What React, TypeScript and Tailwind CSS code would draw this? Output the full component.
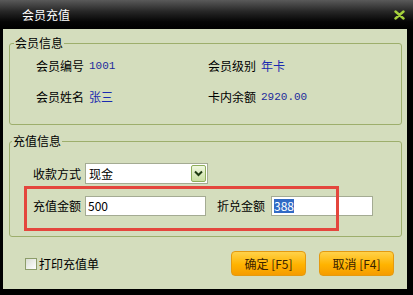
const cjk = "font-['Noto_Sans_CJK_SC','Noto_Sans',sans-serif]";
const mono = "font-['Liberation_Mono','DejaVu_Sans_Mono',monospace]";

function Field({ label, value, num }: { label: string; value: string; num?: boolean }) {
  return (
    <div className="flex items-center h-[20px]">
      <span className="w-[53px] shrink-0">{label}</span>
      <span className={num ? `${mono} text-[11px] text-[#1c2a9c]` : "text-[#1a2ab0]"}>{value}</span>
    </div>
  );
}

const App = () => {
  return (
    <div className={`w-[413px] h-[295px] bg-black flex flex-col ${cjk} text-[12px] leading-[16px] text-black`}>
      {/* title bar */}
      <div className="h-[29px] shrink-0 flex items-center justify-between pl-[22px] pr-[8px] bg-[linear-gradient(#5a5a5a,#262626_40%,#050505_75%,#000)]">
        <span className="text-white text-[12px]">会员充值</span>
        <svg width="11" height="10" viewBox="0 0 11 10">
          <path d="M1.5 1.5 L9.5 8.5 M9.5 1.5 L1.5 8.5" stroke="#a6d13c" strokeWidth="2.4" strokeLinecap="round" />
        </svg>
      </div>

      {/* body */}
      <div className="relative ml-[3px] mr-[6px] h-[260px] shrink-0 bg-[#d4ddbd] pt-[6px] pl-[6px] pr-[5px] flex flex-col">
        <fieldset className="h-[90px] border border-[#9dae6c] rounded-[3px]">
          <legend className="ml-[4px] px-[1px]">会员信息</legend>
          <div className="grid grid-cols-[172px_1fr] gap-y-[11px] pt-[5px] pl-[26px]">
            <Field label="会员编号" value="1001" num />
            <Field label="会员级别" value="年卡" />
            <Field label="会员姓名" value="张三" />
            <Field label="卡内余额" value="2920.00" num />
          </div>
        </fieldset>

        <fieldset className="mt-[8px] h-[104px] border border-[#9dae6c] rounded-[3px]">
          <legend className="ml-[2px] px-[1px]">充值信息</legend>
          <div className="pl-[23px] pt-[14px] flex flex-col gap-[12px]">
            <div className="flex items-center h-[21px]">
              <span className="w-[52px] shrink-0">收款方式</span>
              <div className="w-[123px] h-[21px] bg-white border border-[#a4ab93] flex items-center justify-between pl-[3px] pr-[1px]">
                <span>现金</span>
                <div className="w-[15px] h-[17px] rounded-[2px] border border-[#8fae5c] bg-[linear-gradient(#f0f8e0,#c9dfa2)] flex items-center justify-center">
                  <svg width="9" height="7" viewBox="0 0 9 7">
                    <path d="M1 1.5 L4.5 5 L8 1.5" fill="none" stroke="#1f3a12" strokeWidth="2" />
                  </svg>
                </div>
              </div>
            </div>
            <div className="flex items-center h-[20px]">
              <span className="w-[52px] shrink-0">充值金额</span>
              <div className="w-[121px] h-[20px] bg-white border border-[#a4ab93] pl-[2px] flex items-center">500</div>
              <span className="ml-[11px] w-[54px] shrink-0">折兑金额</span>
              <div className="w-[102px] h-[20px] bg-white border border-[#a4ab93] pl-[2px] flex items-center">
                <span className="bg-[#316ac5] text-white leading-[14px]">388</span>
              </div>
            </div>
          </div>
        </fieldset>

        <div className="mt-[14px] h-[25px] flex items-center pl-[16px] pr-[8px]">
          <div className="w-[12px] h-[12px] border border-[#8c9c6a] bg-[linear-gradient(135deg,#d9ddd3,#ffffff)]" />
          <span className="ml-[2px]">打印充值单</span>
          <div className="ml-auto flex gap-[13px]">
            <button className="w-[75px] h-[25px] rounded-[4px] border border-[#e49a10] bg-[linear-gradient(#ffd24a,#ffb300_55%,#f59c00)] text-[#3a2300]">
              确定 [F5]
            </button>
            <button className="w-[75px] h-[25px] rounded-[4px] border border-[#e49a10] bg-[linear-gradient(#ffd24a,#ffb300_55%,#f59c00)] text-[#3a2300]">
              取消 [F4]
            </button>
          </div>
        </div>

        {/* red annotation box */}
        <div className="absolute left-[21px] top-[157px] w-[315px] h-[45px] border-[3px] border-[#e4463d] pointer-events-none" />
      </div>
    </div>
  );
};

export default App;
